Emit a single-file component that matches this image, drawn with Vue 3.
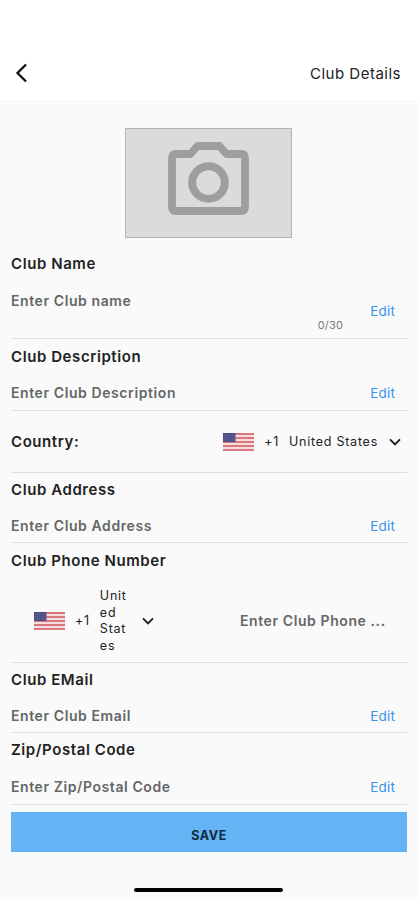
<template>
  <div class="club-details">
    <header class="app-bar">
      <button class="back" aria-label="Back">
        <svg width="14" height="22" viewBox="0 0 14 22">
          <path d="M12 2.5 L3.5 11 L12 19.5" fill="none" stroke="#111" stroke-width="2.3" />
        </svg>
      </button>
      <h1>Club Details</h1>
    </header>

    <main class="content">
      <div class="photo">
        <svg width="81" height="73" viewBox="0 0 81 73">
          <path
            d="M8 12 H22.5 L29.5 4 H51.5 L58.5 12 H73 Q77 12 77 16 V65 Q77 69 73 69 H8 Q4 69 4 65 V16 Q4 12 8 12 Z"
            fill="none" stroke="#9e9e9e" stroke-width="7.8" stroke-linejoin="round" />
          <circle cx="40.5" cy="40.5" r="16.3" fill="none" stroke="#9e9e9e" stroke-width="8" />
        </svg>
      </div>

      <section v-for="field in fields" :key="field.id" class="field" :class="field.id">
        <h2>{{ field.label }}</h2>

        <!-- country picker -->
        <div v-if="field.type === 'country' || field.type === 'phone'" class="picker">
          <svg class="flag" width="31" height="18" viewBox="0 0 31 18">
            <rect width="31" height="18" fill="#f5dddf" />
            <rect v-for="n in 5" :key="n" y="0" width="31" height="2" fill="#d8777e"
              :transform="`translate(0 ${(n - 1) * 4})`" />
            <rect width="12.5" height="9" fill="#4b4f86" />
            <path d="M1 2.5H12M1 4.8H12M1 7H12" stroke="#7d80aa" stroke-width="0.7" stroke-dasharray="1 1" />
          </svg>
          <span class="code">+1</span>
          <span class="country-name">United States</span>
          <svg class="chevron" width="12" height="8" viewBox="0 0 12 8">
            <path d="M1 1.3 L6 6.3 L11 1.3" fill="none" stroke="#1c1c1c" stroke-width="1.9" />
          </svg>
        </div>

        <p v-if="field.type === 'phone'" class="hint">{{ field.hint }}</p>

        <div v-if="field.type === 'text'" class="entry">
          <div class="input">
            <p class="hint">{{ field.hint }}</p>
            <span v-if="field.max" class="counter">0/{{ field.max }}</span>
          </div>
          <button class="edit">Edit</button>
        </div>
      </section>

      <button class="save">SAVE</button>
    </main>

    <div class="home-indicator"></div>
  </div>
</template>

<script setup>
const fields = [
  { id: 'name', type: 'text', label: 'Club Name', hint: 'Enter Club name', max: 30 },
  { id: 'description', type: 'text', label: 'Club Description', hint: 'Enter Club Description' },
  { id: 'country', type: 'country', label: 'Country:' },
  { id: 'address', type: 'text', label: 'Club Address', hint: 'Enter Club Address' },
  { id: 'phone', type: 'phone', label: 'Club Phone Number', hint: 'Enter Club Phone ...' },
  { id: 'email', type: 'text', label: 'Club EMail', hint: 'Enter Club Email' },
  { id: 'zip', type: 'text', label: 'Zip/Postal Code', hint: 'Enter Zip/Postal Code' },
];
</script>

<style>
body {
  background: #fafafa;
}
</style>

<style scoped>
.club-details {
  display: flex;
  flex-direction: column;
  height: 900px;
  box-sizing: border-box;
  padding-bottom: 8px;
  background: #fafafa;
  color: #222;
  font-family: Inter, "Liberation Sans", sans-serif;
}
h1, h2, p {
  margin: 0;
}
button {
  padding: 0;
  border: none;
  background: none;
  font-family: inherit;
}
.app-bar {
  display: flex;
  align-items: center;
  justify-content: space-between;
  height: 102px;
  box-sizing: border-box;
  padding: 45px 16px 0 14px;
  background: #fff;
  border-bottom: 1px solid #f5f5f5;
}
.back {
  display: flex;
}
h1 {
  font-size: 15px;
  font-weight: 400;
  letter-spacing: 0.5px;
}
.content {
  display: flex;
  flex-direction: column;
  padding: 26px 10px 0 11px;
}
.photo {
  align-self: center;
  display: flex;
  justify-content: center;
  width: 167px;
  height: 110px;
  box-sizing: border-box;
  margin-right: 2px;
  padding-top: 13px;
  border: 1px solid #b5b5b5;
  background: #dbdbdb;
}
.field {
  display: flex;
  flex-direction: column;
  height: 70px;
  box-sizing: border-box;
  border-bottom: 1px solid #dfdfdf;
}
h2 {
  padding-top: 7px;
  font-size: 15px;
  line-height: 20px;
  font-weight: 600;
  letter-spacing: 0.58px;
}
.entry {
  display: flex;
  align-items: center;
  justify-content: space-between;
  height: 20px;
  margin-top: 16px;
  padding-right: 12px;
}
.hint {
  color: #666;
  font-size: 14px;
  line-height: 20px;
  font-weight: 600;
  letter-spacing: 0.59px;
  white-space: nowrap;
}
.input {
  flex: 1;
  display: flex;
  flex-direction: column;
}
.counter {
  align-self: flex-end;
  margin: 7px 27px 0 0;
  color: #777;
  font-size: 11px;
  line-height: 14px;
  letter-spacing: 0.2px;
}
.edit {
  color: #3793ee;
  font-size: 13.5px;
  line-height: 20px;
  letter-spacing: 0.2px;
}
.name {
  height: 101px;
}
.name h2 {
  padding-top: 16px;
}
.name .entry {
  height: 41px;
  margin-top: 17px;
}
.name .edit {
  padding-bottom: 1px;
}
.description, .zip {
  height: 72px;
}
.description h2 {
  padding-top: 8px;
}
.description .entry {
  margin-top: 16px;
}
.zip .entry {
  margin-top: 17px;
}
.country {
  flex-direction: row;
  align-items: center;
  justify-content: space-between;
  height: 62px;
}
.country h2 {
  padding: 0;
}
.picker {
  display: flex;
  align-items: center;
  font-size: 12.5px;
  line-height: 16.5px;
  letter-spacing: 0.75px;
}
.country .picker {
  padding-right: 6px;
}
.country .code, .country .country-name {
  padding-top: 1px;
}
.code {
  margin: 0 10px;
}
.country .chevron {
  margin-left: 11px;
}
.phone {
  display: grid;
  grid-template-columns: 229px 1fr;
  grid-template-rows: 27px 1fr;
  height: 120px;
}
.phone h2 {
  grid-column: 1 / 3;
  padding-top: 8px;
}
.phone .picker {
  padding: 10px 0 0 23px;
}
.phone .country-name {
  width: 31px;
  margin-right: 11px;
  overflow-wrap: anywhere;
}
.phone .hint {
  align-self: center;
  padding-top: 10px;
}
.save {
  height: 40px;
  margin-top: 7px;
  padding-top: 7px;
  background: #64b3f5;
  color: #12283c;
  font-size: 12.5px;
  font-weight: 700;
  letter-spacing: 0.6px;
}
.home-indicator {
  width: 149px;
  height: 4px;
  margin: auto auto 0;
  border-radius: 2px;
  background: #000;
}
</style>
